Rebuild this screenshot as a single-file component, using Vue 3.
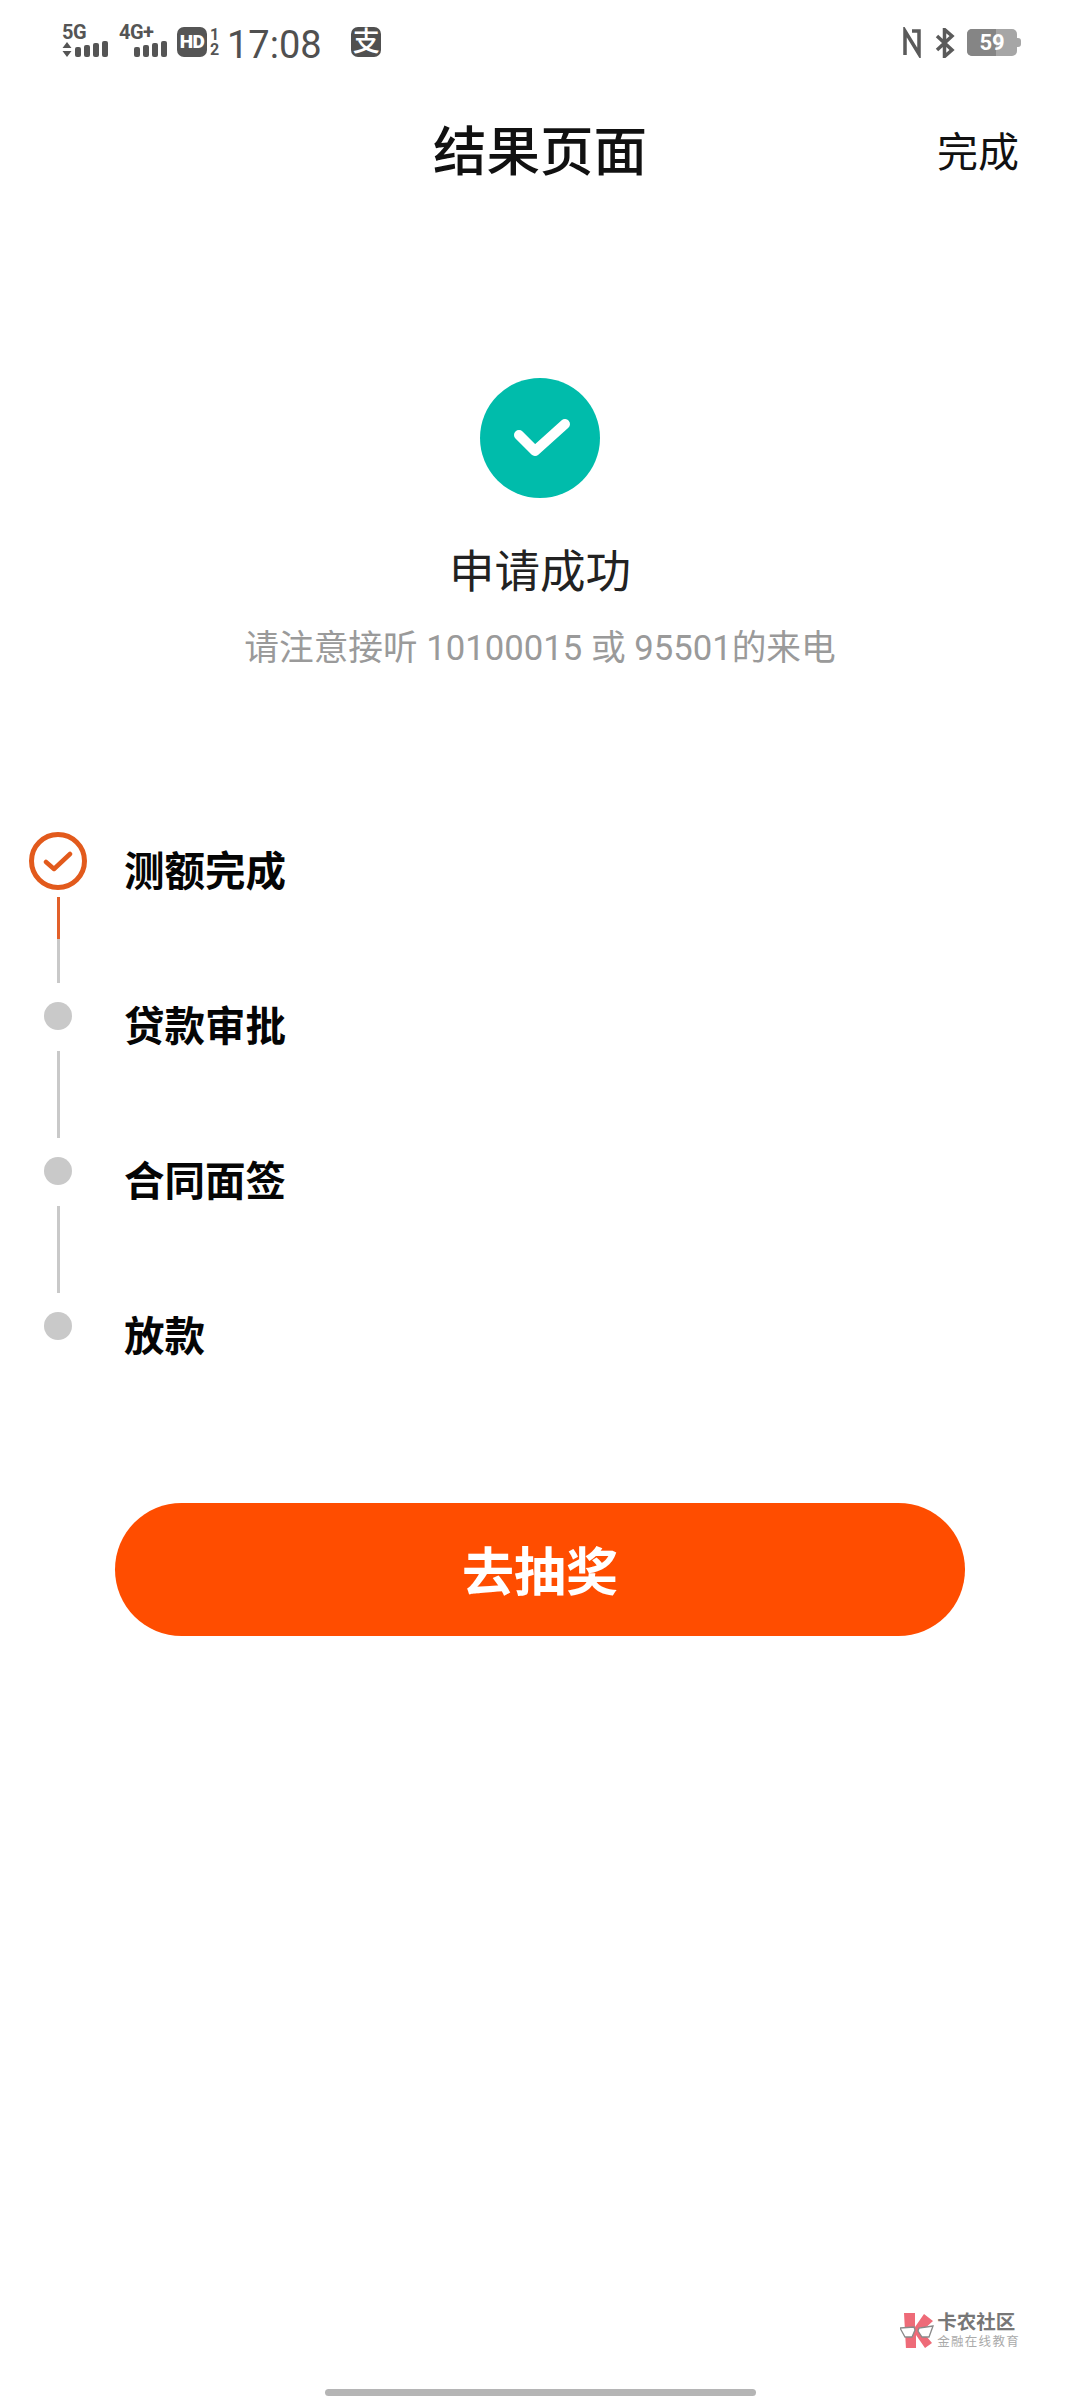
<script setup>
const steps = [
  { label: '测额完成', state: 'done' },
  { label: '贷款审批', state: 'todo' },
  { label: '合同面签', state: 'todo' },
  { label: '放款', state: 'last' }
]
</script>

<template>
  <div class="page">
    <div class="status">
      <div class="status-left">
        <div class="net">
          <span class="net-label">5G</span>
          <div class="bars">
            <svg class="updown" width="10" height="15" viewBox="0 0 10 15"><path d="M5 0l4.500 6h-9zM5 15L.5 9h9z" fill="#555"/></svg>
            <i class="b1"></i><i class="b2"></i><i class="b3"></i><i class="b4"></i>
          </div>
        </div>
        <div class="net net2">
          <span class="net-label">4G+</span>
          <div class="bars bars2"><i class="b1"></i><i class="b2"></i><i class="b3"></i><i class="b4"></i></div>
        </div>
        <span class="hd">HD</span>
        <div class="sims"><span>1</span><span>2</span></div>
        <span class="time">17:08</span>
        <span class="alipay">支</span>
      </div>
      <div class="status-right">
        <svg width="20" height="31" viewBox="0 0 20 31" fill="none"><path d="M3 28V4L17 27V4h-7" stroke="#5a5a5a" stroke-width="3.500"/></svg>
        <svg class="bt" width="20" height="30" viewBox="0 0 20 30" fill="none"><path d="M2 8l15 14-7.500 6.500V1.500L17 8 2 22" stroke="#5a5a5a" stroke-width="3.500"/></svg>
        <div class="battery"><span class="battery-fill"></span><span class="battery-num">59</span></div>
      </div>
    </div>

    <header class="nav">
      <h1>结果页面</h1>
      <span class="nav-action">完成</span>
    </header>

    <section class="result">
      <div class="result-icon">
        <svg width="70" height="56" viewBox="0 0 70 56" fill="none"><path d="M14 25l16 16L60 14" stroke="#fff" stroke-width="10" stroke-linecap="round" stroke-linejoin="round"/></svg>
      </div>
      <div class="result-title">申请成功</div>
      <div class="result-sub">请注意接听 10100015 或 95501的来电</div>
    </section>

    <ol class="steps">
      <li v-for="s in steps" :key="s.label" class="step">
        <div class="marker">
          <div v-if="s.state === 'done'" class="ring">
            <svg width="30" height="24" viewBox="0 0 30 24" fill="none"><path d="M3 13l8 7L27 5" stroke="#e25a1c" stroke-width="4.500" stroke-linecap="round" stroke-linejoin="round"/></svg>
          </div>
          <div v-else class="dot"></div>
          <div v-if="s.state === 'done'" class="line line-done"></div>
          <div v-else-if="s.state === 'todo'" class="line"></div>
        </div>
        <span class="step-label">{{ s.label }}</span>
      </li>
    </ol>

    <button class="cta">去抽奖</button>

    <div class="spacer"></div>

    <div class="watermark">
      <svg width="34" height="35" viewBox="0 0 34 35">
        <path d="M4 0h11v14L24 1l9 7-11 10 10 12-7 5-9-13v14H6z" fill="#ee6b78"/>
        <path d="M0 15l14-1 1 3-3 7H5zM33 13l-14 2-1 3 4 6h7z" fill="#fff" stroke="#8a8a8a" stroke-width="1.300"/>
      </svg>
      <div class="wm-text">
        <span class="wm-main">卡农社区</span>
        <span class="wm-sub">金融在线教育</span>
      </div>
    </div>
    <div class="home"></div>
  </div>
</template>

<style scoped>
.page {
  width: 1080px;
  height: 2400px;
  background: #fff;
  display: flex;
  flex-direction: column;
  font-family: "Roboto", "Noto Sans CJK SC", sans-serif;
  color: #111;
  overflow: hidden;
}
.status {
  height: 80px;
  padding: 27px 62px 0 62px;
  box-sizing: border-box;
  display: flex;
  justify-content: space-between;
  align-items: flex-start;
  color: #555;
}
.status-left { display: flex; align-items: flex-start; }
.status-right { display: flex; align-items: center; margin-right: 1px; }
.net { width: 57px; display: flex; flex-direction: column; margin-top: -3px; }
.net2 { width: 48px; }
.net-label { font-size: 20px; line-height: 17px; font-weight: 700; height: 16px; letter-spacing: -.5px; }
.bars { display: flex; align-items: flex-end; gap: 3px; height: 16px; margin-top: 1px; }
.bars2 { justify-content: flex-end; }
.bars i { width: 6px; background: #555; border-radius: 2px; display: block; }
.updown { margin-right: 0; }
.b1 { height: 10px; }
.b2 { height: 12px; }
.b3 { height: 14px; }
.b4 { height: 16px; }
.hd {
  width: 30px;
  height: 30px;
  margin-left: 10px;
  border-radius: 7px;
  background: #555;
  color: #fff;
  font-size: 19px;
  font-weight: 900;
  line-height: 30px;
  text-align: center;
  letter-spacing: -.5px;
}
.sims { display: flex; flex-direction: column; width: 12px; margin-left: 3px; font-size: 16px; font-weight: 700; line-height: 15px; }
.time { font-size: 38px; line-height: 38px; margin-left: 5px; margin-top: -1px; color: #505050; font-weight: 400; }
.alipay {
  width: 30px;
  height: 30px;
  margin-left: 29.500px;
  background: #505050;
  border-radius: 7px;
  color: #fff;
  font-size: 27px;
  line-height: 30px;
  text-align: center;
  font-weight: 500;
}
.bt { margin-left: 13px; }
.battery {
  position: relative;
  width: 50px;
  height: 27px;
  margin-left: 12px;
  border-radius: 5px;
  background: #a6a6a6;
}
.battery::after {
  content: "";
  position: absolute;
  right: -4px;
  top: 9px;
  width: 4px;
  height: 9px;
  border-radius: 0 3px 3px 0;
  background: #a6a6a6;
}
.battery-fill {
  position: absolute;
  left: 0;
  top: 0;
  bottom: 0;
  width: 29px;
  background: #858585;
  border-radius: 5px 0 0 5px;
}
.battery-num {
  position: absolute;
  inset: 0;
  text-align: center;
  color: #fff;
  font-size: 22px;
  line-height: 27px;
  font-weight: 700;
}
.nav {
  position: relative;
  height: 146px;
  display: flex;
  align-items: center;
  justify-content: center;
}
.nav h1 {
  margin: 0;
  font-size: 53.500px;
  font-weight: 500;
  line-height: 146px;
  color: #111;
}
.nav-action {
  position: absolute;
  right: 61px;
  top: 48px;
  font-size: 41px;
  line-height: 50px;
  color: #111;
}
.result {
  display: flex;
  flex-direction: column;
  align-items: center;
  padding-top: 152px;
}
.result-icon {
  width: 120px;
  height: 120px;
  border-radius: 50%;
  background: #00bcab;
  display: flex;
  align-items: center;
  justify-content: center;
}
.result-title {
  margin-top: 45px;
  font-size: 45.500px;
  line-height: 60px;
  color: #222;
}
.result-sub {
  margin-top: 23px;
  font-size: 34.700px;
  line-height: 44px;
  color: #9a9a9a;
}
.steps {
  list-style: none;
  margin: 0;
  padding: 162px 0 0 29px;
}
.step {
  height: 155px;
  display: flex;
  align-items: flex-start;
}
.marker {
  width: 58px;
  display: flex;
  flex-direction: column;
  align-items: center;
  flex: none;
}
.ring {
  width: 58px;
  height: 58px;
  box-sizing: border-box;
  border: 5px solid #e25a1c;
  border-radius: 50%;
  display: flex;
  align-items: center;
  justify-content: center;
}
.dot {
  width: 28px;
  height: 28px;
  border-radius: 50%;
  background: #c9c9c9;
  margin-top: 15px;
}
.line {
  width: 3px;
  height: 87px;
  margin-top: 21px;
  background: #c9c9c9;
}
.line-done {
  height: 86px;
  margin-top: 7px;
  background: linear-gradient(#e2602a 0, #e2602a 49%, #c9c9c9 49%, #c9c9c9 100%);
}
.step-label {
  margin-left: 37px;
  font-size: 40.500px;
  line-height: 56px;
  margin-top: 12px;
  font-weight: 700;
  color: #050505;
}
.cta {
  display: block;
  width: 850px;
  height: 133px;
  margin: 51px 0 0 115px;
  border: 0;
  border-radius: 67px;
  background: #ff4d00;
  color: #fff;
  font-family: inherit;
  font-size: 52px;
  font-weight: 700;
  padding: 0 0 3px;
}
.spacer { flex: 1; }
.watermark {
  display: flex;
  align-items: center;
  align-self: flex-end;
  margin-right: 60px;
}
.wm-text { display: flex; flex-direction: column; margin-left: 3px; }
.wm-main { font-size: 19.500px; line-height: 22px; font-weight: 700; color: #777; }
.wm-sub { font-size: 12.500px; line-height: 15px; color: #aaa; letter-spacing: 1.300px; }
.home {
  width: 431px;
  height: 7px;
  margin: 40px 0 4px 325px;
  border-radius: 4px;
  background: #b5b5b5;
}
</style>
